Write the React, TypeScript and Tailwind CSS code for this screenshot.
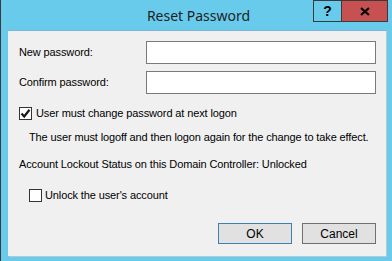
import React from 'react';

const Check = ({ checked }: { checked: boolean }) => (
  <span className="flex items-center justify-center w-[13px] h-[13px] border border-[#333333] bg-white shrink-0">
    {checked && (
      <svg width="11" height="11" viewBox="0 0 11 11">
        <path d="M1.5 5.5 L4.2 8.5 L9.5 1.8" fill="none" stroke="#1a1a1a" strokeWidth="2.2" />
      </svg>
    )}
  </span>
);

const App = () => {
  return (
    <div className="w-[392px] h-[261px] bg-[#69cbeb] border-l border-[#3a3a3a] flex flex-col overflow-hidden" style={{ fontFamily: '"Liberation Sans", Arial, sans-serif' }}>
      {/* Title bar */}
      <div className="relative h-[30px] shrink-0 flex items-center justify-center">
        <span className="text-[14px] text-[#1e1e1e] pl-[4px]" style={{ fontFamily: '"Noto Sans", sans-serif' }}>
          Reset Password
        </span>
        <div className="absolute top-0 left-[312px] flex">
          <div className="w-[29px] h-[22px] border border-[#3a3a3a] flex items-center justify-center text-[14px] font-bold text-black">?</div>
          <div className="w-[46px] h-[22px] bg-[#c75050] border-y border-r border-[#3a3a3a] flex items-center justify-center">
            <svg width="10" height="9" viewBox="0 0 10 9">
              <path d="M1 1 L9 8 M9 1 L1 8" stroke="#000" strokeWidth="2.2" />
            </svg>
          </div>
        </div>
      </div>

      {/* Client area */}
      <div className="ml-[7px] w-[378px] h-[226px] bg-[#f0f0f0] border-t border-[#7fb4d4] shadow-[1px_1px_0_#b8c8d0] text-[11px] tracking-[-0.12px] text-black flex flex-col">
        <div className="flex items-center pl-[11px] mt-[10px] h-[23px]">
          <span className="w-[127px]">New password:</span>
          <div className="w-[230px] h-[23px] bg-white border border-[#7a7a7a]" />
        </div>
        <div className="flex items-center pl-[11px] mt-[7px] h-[23px]">
          <span className="w-[127px]">Confirm password:</span>
          <div className="w-[230px] h-[23px] bg-white border border-[#7a7a7a]" />
        </div>
        <div className="flex items-center gap-[4px] pl-[11px] mt-[13px] h-[13px]">
          <Check checked />
          <span>User must change password at next logon</span>
        </div>
        <div className="pl-[21px] mt-[11px] leading-[13px]">
          The user must logoff and then logon again for the change to take effect.
        </div>
        <div className="pl-[11px] mt-[14px] leading-[13px]">
          Account Lockout Status on this Domain Controller: Unlocked
        </div>
        <div className="flex items-center gap-[3px] pl-[21px] mt-[18px] h-[13px]">
          <Check checked={false} />
          <span>Unlock the user's account</span>
        </div>
        <div className="flex justify-end gap-[10px] pr-[10px] mt-[21px]">
          <button className="w-[74px] h-[21px] bg-[#e1e1e1] border border-[#3c7fb1] text-[12px] tracking-normal text-black">OK</button>
          <button className="w-[74px] h-[21px] bg-[#e1e1e1] border border-[#707070] text-[12px] tracking-normal text-black">Cancel</button>
        </div>
      </div>
    </div>
  );
};

export default App;
